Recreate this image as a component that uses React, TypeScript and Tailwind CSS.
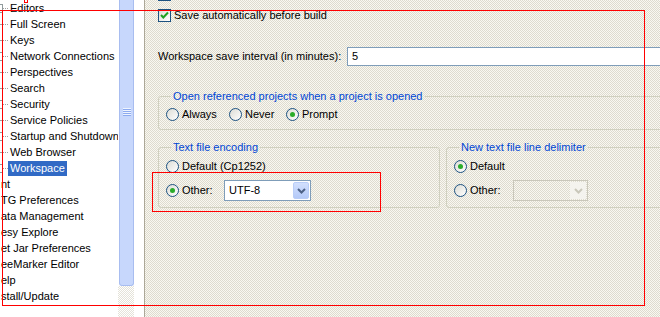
import React from "react";

const checker =
  "bg-[image:repeating-conic-gradient(#dedbcf_0%_25%,#f9f8f1_0%_50%)] bg-size-[2px_2px]";

type TreeItem = { label: string; exp?: boolean; sel?: boolean; top?: boolean };

const items: TreeItem[] = [
  { label: "Editors", exp: true },
  { label: "Full Screen" },
  { label: "Keys" },
  { label: "Network Connections", exp: true },
  { label: "Perspectives" },
  { label: "Search" },
  { label: "Security", exp: true },
  { label: "Service Policies" },
  { label: "Startup and Shutdown", exp: true },
  { label: "Web Browser" },
  { label: "Workspace", exp: true, sel: true },
  { label: "nt", top: true },
  { label: "TG Preferences", top: true },
  { label: "ata Management", top: true },
  { label: "esy Explore", top: true },
  { label: "et Jar Preferences", top: true },
  { label: "eeMarker Editor", top: true },
  { label: "elp", top: true },
  { label: "stall/Update", top: true },
];

function Radio({ checked }: { checked?: boolean }) {
  return (
    <div className="w-[13px] h-[13px] shrink-0 rounded-full border border-[#1c5180] bg-linear-to-br from-[#dcdcd5] to-white flex items-center justify-center">
      {checked && <div className="w-[5px] h-[5px] rounded-full bg-[#2aac2a]" />}
    </div>
  );
}

function Check({ checked }: { checked?: boolean }) {
  return (
    <div className="w-[13px] h-[13px] shrink-0 border border-[#1c5180] bg-linear-to-br from-[#dcdcd5] to-white relative">
      {checked && (
        <svg width="11" height="11" viewBox="0 0 11 11" className="absolute left-0 top-0">
          <path d="M2 5 L4.3 7.5 L9 2.5" fill="none" stroke="#21a121" strokeWidth="2" />
        </svg>
      )}
    </div>
  );
}

function Chevron({ color }: { color: string }) {
  return (
    <svg width="9" height="6" viewBox="0 0 9 6">
      <path d="M1 1 L4.5 4.5 L8 1" fill="none" stroke={color} strokeWidth="2" />
    </svg>
  );
}

function RedBox({ className }: { className: string }) {
  return (
    <div className={`absolute pointer-events-none ${className}`}>
      <div className="absolute left-0 top-0 w-full h-px bg-[#ff0000]" />
      <div className="absolute left-0 bottom-0 w-full h-px bg-[#ff0000]" />
      <div className="absolute left-0 top-0 w-px h-full bg-[#ff0000]" />
      <div className="absolute right-0 top-0 w-px h-full bg-[#ff0000]" />
    </div>
  );
}

export default function App() {
  return (
    <div className="w-[660px] h-[317px] relative overflow-hidden flex bg-white text-[11px] leading-[13px] text-black font-['Liberation_Sans',Arial,sans-serif]">
      {/* Tree */}
      <div className="w-[118px] h-full overflow-hidden bg-white">
        {items.map((it, i) => (
          <div key={i} className="h-[16px] relative flex items-center whitespace-nowrap">
            {!it.top && (
              <>
                <div className="absolute left-0 top-[8px] w-[8px] border-t border-dotted border-[#a0a0a0]" />
                {it.exp && (
                  <div className="absolute left-[-6px] top-[4px] w-[9px] h-[9px] border border-[#919b9c] bg-white" />
                )}
              </>
            )}
            {it.top ? (
              <span className="pl-[1px]">{it.label}</span>
            ) : it.sel ? (
              <span className="ml-[8px] px-[2px] h-[15px] flex items-center bg-[#316ac5] text-white">
                {it.label}
              </span>
            ) : (
              <span className="pl-[10px]">{it.label}</span>
            )}
          </div>
        ))}
      </div>

      {/* Scrollbar */}
      <div className="w-[16px] h-full flex flex-col">
        <div className="ml-[1px] w-[15px] h-[286px] shrink-0 bg-[#c7d7fc] border border-t-0 border-[#a8bdf0] rounded-b-[3px] relative">
          <div className="absolute left-[3px] top-[108px] w-[8px] flex flex-col">
            <div className="h-px bg-[#eef4fe]" />
            <div className="h-px bg-[#8caaf0]" />
            <div className="h-px bg-[#eef4fe]" />
            <div className="h-px bg-[#8caaf0]" />
            <div className="h-px bg-[#eef4fe]" />
            <div className="h-px bg-[#8caaf0]" />
            <div className="h-px bg-[#eef4fe]" />
            <div className="h-px bg-[#8caaf0]" />
          </div>
        </div>
        <div className="flex-1 bg-[image:repeating-conic-gradient(#e4e2d8_0%_25%,#ffffff_0%_50%)] bg-size-[2px_2px]" />
      </div>
      <div className="w-[10px] h-full bg-white" />
      <div className="w-px h-full bg-[#aca899]" />

      {/* Content */}
      <div className={`flex-1 h-full overflow-hidden ${checker}`}>
        <div className="w-[580px] pl-[13px] flex flex-col">
          <div className="mt-[-12px] h-[13px] flex items-center">
            <Check checked />
          </div>
          <div className="mt-[8px] h-[13px] flex items-center gap-[3px]">
            <Check checked />
            <span>Save automatically before build</span>
          </div>
          <div className="mt-[25px] h-[19px] flex items-center">
            <span className="w-[189px] shrink-0">Workspace save interval (in minutes):</span>
            <div className="flex-1 h-[19px] border border-[#7f9db9] bg-white pl-[4px] flex items-center">5</div>
          </div>

          <fieldset className="mt-[23px] border border-[#d0d0bf] rounded-[3px] pl-[7px] pb-[8px]">
            <legend className="ml-[5px] px-[2px] leading-[14px] text-[#0046d5]">
              Open referenced projects when a project is opened
            </legend>
            <div className="mt-[5px] h-[13px] flex items-center">
              <div className="w-[63px] flex items-center gap-[3px]">
                <Radio />
                <span>Always</span>
              </div>
              <div className="w-[57px] flex items-center gap-[3px]">
                <Radio />
                <span>Never</span>
              </div>
              <div className="flex items-center gap-[3px]">
                <Radio checked />
                <span>Prompt</span>
              </div>
            </div>
          </fieldset>

          <div className="mt-[10px] flex gap-[6px]">
            <fieldset className="w-[282px] shrink-0 border border-[#d0d0bf] rounded-[3px] pl-[7px] pb-[6px]">
              <legend className="ml-[5px] px-[2px] leading-[14px] text-[#0046d5]">Text file encoding</legend>
              <div className="mt-[6px] h-[13px] flex items-center gap-[3px]">
                <Radio />
                <span>Default (Cp1252)</span>
              </div>
              <div className="mt-[7px] h-[21px] flex items-center">
                <div className="w-[58px] flex items-center gap-[3px]">
                  <Radio checked />
                  <span>Other:</span>
                </div>
                <div className="w-[87px] h-[21px] border border-[#7f9db9] bg-white relative flex items-center pl-[4px]">
                  UTF-8
                  <div className="absolute right-[1px] top-[1px] w-[16px] h-[17px] rounded-[2px] border border-[#b9cdf7] bg-linear-to-b from-[#d2e0fd] to-[#b4c9f8] flex items-center justify-center">
                    <Chevron color="#4d6185" />
                  </div>
                </div>
              </div>
            </fieldset>

            <fieldset className="flex-1 border border-[#d0d0bf] rounded-[3px] pl-[7px] pb-[6px]">
              <legend className="ml-[5px] px-[2px] leading-[14px] text-[#0046d5]">New text file line delimiter</legend>
              <div className="mt-[6px] h-[13px] flex items-center gap-[3px]">
                <Radio checked />
                <span>Default</span>
              </div>
              <div className="mt-[7px] h-[21px] flex items-center">
                <div className="w-[59px] flex items-center gap-[3px]">
                  <Radio />
                  <span>Other:</span>
                </div>
                <div className="w-[75px] h-[21px] border border-[#c9c7ba] relative">
                  <div className="absolute right-[1px] top-[1px] w-[16px] h-[17px] bg-[#f4f3ee] flex items-center justify-center">
                    <Chevron color="#c9c7ba" />
                  </div>
                </div>
              </div>
            </fieldset>
          </div>
        </div>
      </div>

      {/* Red annotation rectangles */}
      <RedBox className="left-[2px] top-[10px] w-[643px] h-[296px]" />
      <div className="absolute left-0 top-[10px] w-[3px] h-px bg-[#ff0000]" />
      <RedBox className="left-[24px] top-[-2px] w-[4px] h-[5px]" />
      <RedBox className="left-[152px] top-[172px] w-[229px] h-[40px]" />
    </div>
  );
}
